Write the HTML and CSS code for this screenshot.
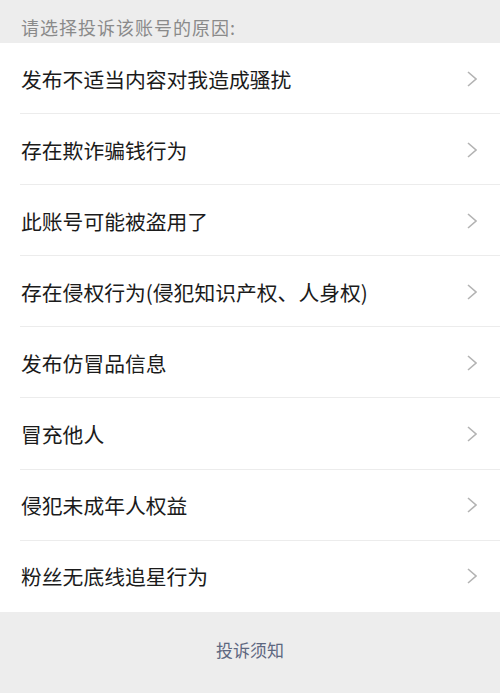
FILE: index.html
```html
<!DOCTYPE html>
<html lang="zh-CN">
<head>
<meta charset="utf-8">
<link rel="stylesheet" href="styles.css">
</head>
<body>
<div class="page">
  <div class="header">请选择投诉该账号的原因:</div>
  <ul class="list">
    <li class="row"><span class="label">发布不适当内容对我造成骚扰</span><svg class="chev" viewBox="0 0 10 16"><path d="M1 1 L9 8 L1 15"/></svg></li>
    <li class="row"><span class="label">存在欺诈骗钱行为</span><svg class="chev" viewBox="0 0 10 16"><path d="M1 1 L9 8 L1 15"/></svg></li>
    <li class="row"><span class="label">此账号可能被盗用了</span><svg class="chev" viewBox="0 0 10 16"><path d="M1 1 L9 8 L1 15"/></svg></li>
    <li class="row"><span class="label">存在侵权行为(侵犯知识产权、人身权)</span><svg class="chev" viewBox="0 0 10 16"><path d="M1 1 L9 8 L1 15"/></svg></li>
    <li class="row"><span class="label">发布仿冒品信息</span><svg class="chev" viewBox="0 0 10 16"><path d="M1 1 L9 8 L1 15"/></svg></li>
    <li class="row"><span class="label">冒充他人</span><svg class="chev" viewBox="0 0 10 16"><path d="M1 1 L9 8 L1 15"/></svg></li>
    <li class="row"><span class="label">侵犯未成年人权益</span><svg class="chev" viewBox="0 0 10 16"><path d="M1 1 L9 8 L1 15"/></svg></li>
    <li class="row"><span class="label">粉丝无底线追星行为</span><svg class="chev" viewBox="0 0 10 16"><path d="M1 1 L9 8 L1 15"/></svg></li>
  </ul>
  <div class="footer"><span class="notice">投诉须知</span></div>
</div>
</body>
</html>
```
FILE: styles.css
```css
html, body {
  margin: 0;
  padding: 0;
  background: #ededed;
}
.page {
  width: 500px;
  height: 693px;
  display: flex;
  flex-direction: column;
  font-family: "Noto Sans CJK SC", "Noto Sans", sans-serif;
  background: #ededed;
}
.header {
  height: 43px;
  box-sizing: border-box;
  padding: 14px 0 0 21px;
  font-size: 18px;
  line-height: 26px;
  letter-spacing: 1px;
  color: #8a8a8a;
}
.list {
  list-style: none;
  margin: 0;
  padding: 0;
  background: #fff;
}
.row {
  height: 71.1px;
  box-sizing: border-box;
  display: flex;
  align-items: center;
  justify-content: space-between;
  padding: 0 23px 0 21px;
  position: relative;
}
.row::after {
  content: "";
  position: absolute;
  left: 20px;
  right: 0;
  bottom: 0;
  height: 1px;
  background: #ececec;
}
.row:last-child::after {
  display: none;
}
.label {
  font-size: 20.8px;
  color: #1b1b1b;
  letter-spacing: 0;
}
.chev {
  width: 10px;
  height: 16px;
  fill: none;
  stroke: #b3b3b3;
  stroke-width: 1.6;
}
.footer {
  flex: 1;
  display: flex;
  justify-content: center;
  padding-top: 26px;
}
.notice {
  font-size: 17px;
  line-height: 24px;
  color: #5d6780;
}
```
